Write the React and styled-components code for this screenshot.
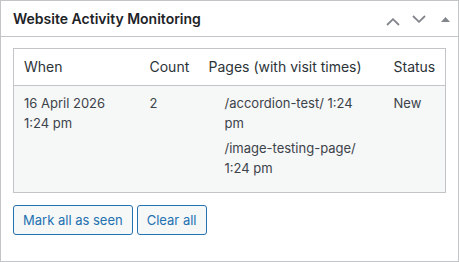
import React from "react";
import styled, { createGlobalStyle } from "styled-components";

const Global = createGlobalStyle`
  html, body { margin: 0; padding: 0; background: #fff; }
  body { font-family: Inter, "Liberation Sans", Arial, sans-serif; color: #3c434a; }
  * { box-sizing: border-box; }
`;

const Postbox = styled.div`
  width: 459px;
  height: 262px;
  border: 1px solid #c3c4c7;
  background: #fff;
  display: flex;
  flex-direction: column;
`;

const Header = styled.div`
  height: 36px;
  border-bottom: 1px solid #c3c4c7;
  display: flex;
  align-items: center;
  padding-left: 12px;
`;

const Title = styled.h2`
  margin: 0;
  flex: 1;
  font-size: 14px;
  font-weight: 600;
  color: #1d2327;
  line-height: 1.4;
`;

const HandleButton = styled.button`
  width: 26px;
  height: 35px;
  padding: 0;
  margin: 0;
  border: 0;
  background: none;
  display: flex;
  justify-content: center;
  align-items: flex-start;
  padding-top: ${(p) => p.$top}px;
  color: #82868c;
`;

const Inside = styled.div`
  margin-top: 11px;
  padding: 0 12px;
`;

const Table = styled.table`
  width: 100%;
  table-layout: fixed;
  border-collapse: collapse;
  border: 1px solid #c3c4c7;
`;

const Th = styled.th`
  text-align: left;
  font-weight: 400;
  font-size: 14px;
  line-height: 20px;
  padding: 8px 10px;
  color: #2c3338;
  border-bottom: 1px solid #c3c4c7;
  white-space: nowrap;
`;

const Row = styled.tr`
  background: #f6f7f7;
`;

const Td = styled.td`
  vertical-align: top;
  font-size: 13px;
  line-height: 19.5px;
  padding: ${(p) => (p.$pages ? "8px 10px 8px 26px" : "8px 10px")};
  color: #3c434a;
`;

const PageList = styled.ul`
  list-style: none;
  margin: 0;
  padding: 0;
  max-width: 138px;
`;

const PageItem = styled.li`
  margin: 0 0 6px;
`;

const Actions = styled.div`
  display: flex;
  gap: 4px;
  margin-top: 12px;
`;

const Button = styled.button`
  height: 30px;
  padding: 0 9px;
  border: 1px solid #2271b1;
  border-radius: 3px;
  background: #f6f7f7;
  color: #2271b1;
  font-family: inherit;
  font-size: 13px;
  line-height: 28px;
  cursor: pointer;
`;

const Chevron = ({ up }) => (
  <svg width="14" height="8" viewBox="0 0 14 8" fill="none">
    <polyline
      points={up ? "1,7 7,1.2 13,7" : "1,1 7,6.8 13,1"}
      stroke="currentColor"
      strokeWidth="1.8"
    />
  </svg>
);

const Triangle = () => (
  <svg width="9" height="5" viewBox="0 0 9 5">
    <polygon points="0,5 4.5,0 9,5" fill="currentColor" />
  </svg>
);

const pages = [
  "/accordion-test/ 1:24 pm",
  "/image-testing-page/ 1:24 pm",
];

export default function App() {
  return (
    <>
      <Global />
      <Postbox>
        <Header>
          <Title>Website Activity Monitoring</Title>
          <HandleButton $top={17} aria-label="Move up">
            <Chevron up />
          </HandleButton>
          <HandleButton $top={14} aria-label="Move down">
            <Chevron />
          </HandleButton>
          <HandleButton $top={16} aria-label="Toggle panel">
            <Triangle />
          </HandleButton>
        </Header>
        <Inside>
          <Table>
            <colgroup>
              <col style={{ width: 126 }} />
              <col style={{ width: 59 }} />
              <col style={{ width: 185 }} />
              <col />
            </colgroup>
            <thead>
              <tr>
                <Th>When</Th>
                <Th>Count</Th>
                <Th>Pages (with visit times)</Th>
                <Th>Status</Th>
              </tr>
            </thead>
            <tbody>
              <Row>
                <Td>16 April 2026 1:24 pm</Td>
                <Td>2</Td>
                <Td $pages>
                  <PageList>
                    {pages.map((p) => (
                      <PageItem key={p}>{p}</PageItem>
                    ))}
                  </PageList>
                </Td>
                <Td>New</Td>
              </Row>
            </tbody>
          </Table>
          <Actions>
            <Button>Mark all as seen</Button>
            <Button>Clear all</Button>
          </Actions>
        </Inside>
      </Postbox>
    </>
  );
}
